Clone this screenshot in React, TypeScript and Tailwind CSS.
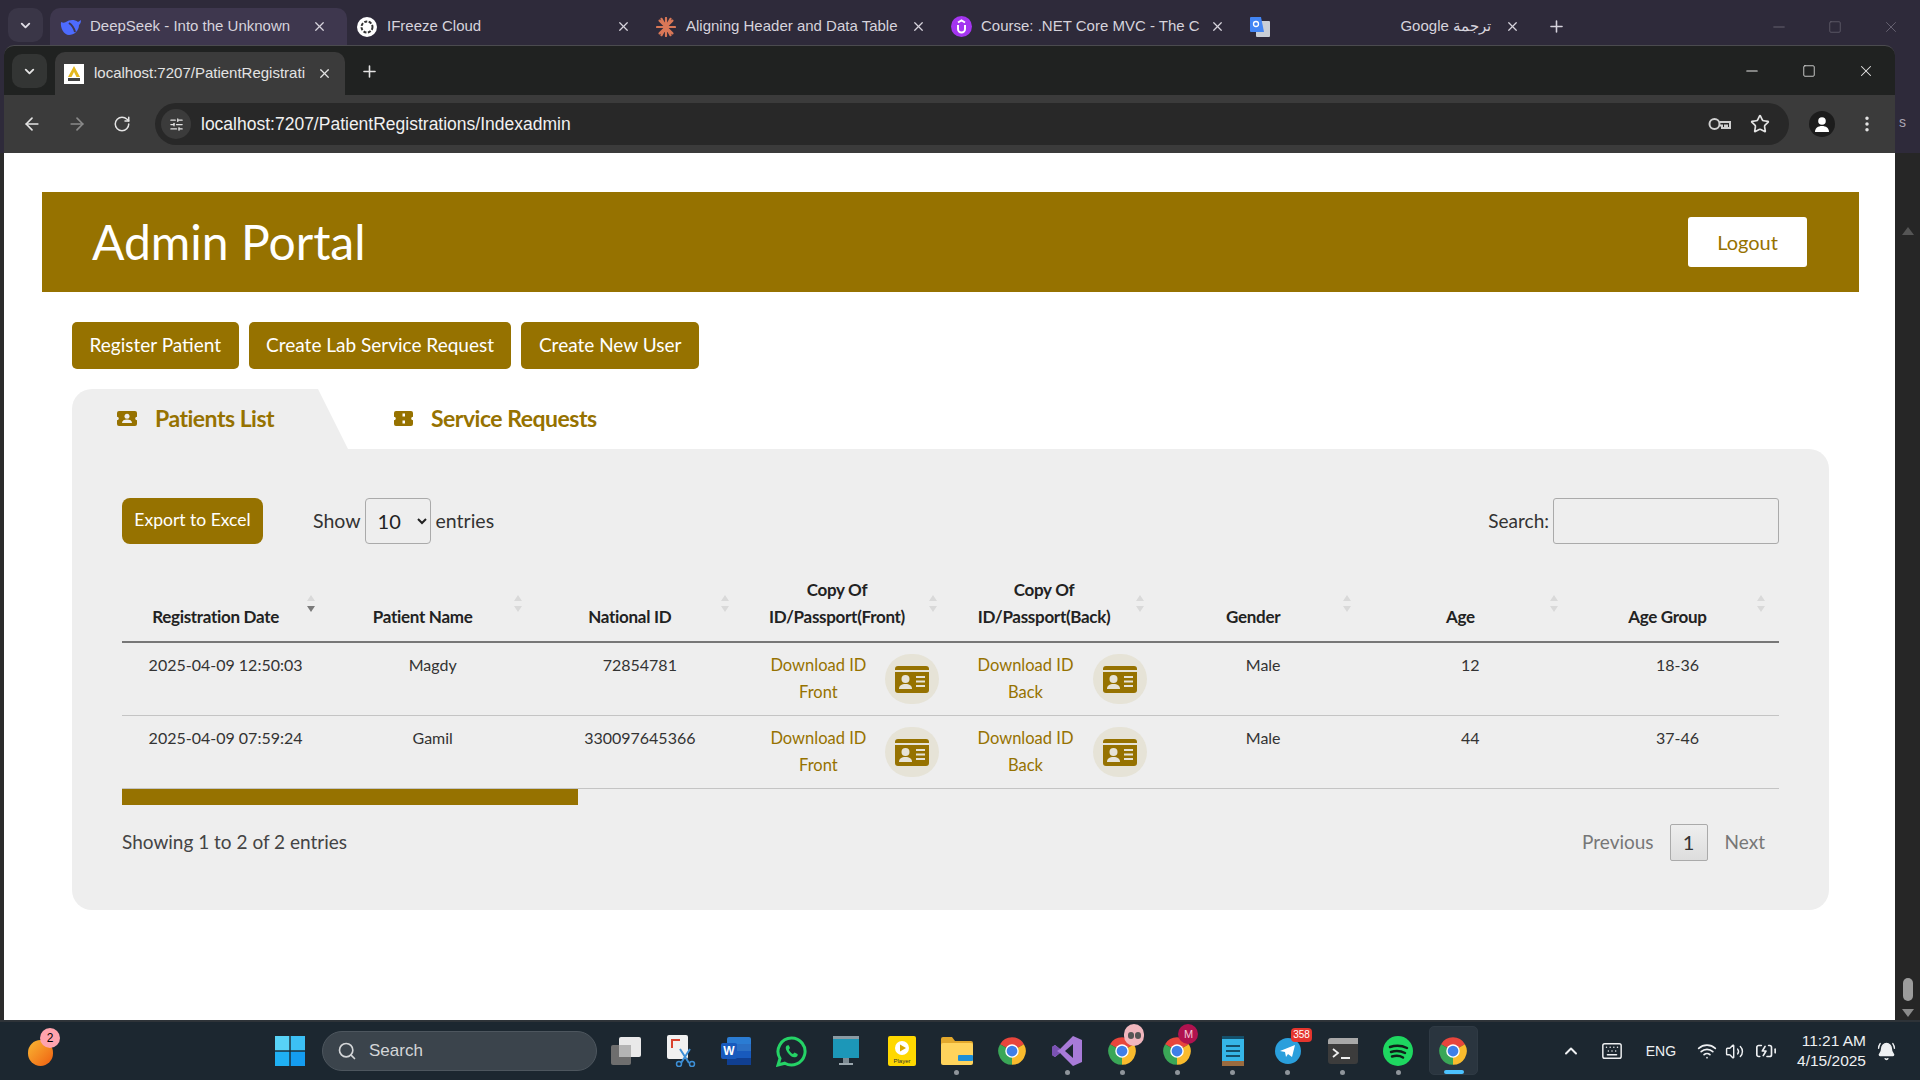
import type { ReactNode } from 'react'
import {
  ArrowLeft,
  ArrowRight,
  ChevronDown,
  ChevronUp,
  EllipsisVertical,
  Minus,
  Plus,
  RotateCw,
  Search,
  SlidersHorizontal,
  Square,
  Star,
  Volume2,
  Wifi,
  X,
  Keyboard,
  BatteryCharging,
  BellRing,
} from 'lucide-react'

const HEADERS = [
  ['Registration Date'],
  ['Patient Name'],
  ['National ID'],
  ['Copy Of', 'ID/Passport(Front)'],
  ['Copy Of', 'ID/Passport(Back)'],
  ['Gender'],
  ['Age'],
  ['Age Group'],
]

const ROWS = [
  { date: '2025-04-09 12:50:03', name: 'Magdy', id: '72854781', gender: 'Male', age: '12', group: '18-36' },
  { date: '2025-04-09 07:59:24', name: 'Gamil', id: '330097645366', gender: 'Male', age: '44', group: '37-46' },
]

function ChromeLogo({ size = 30 }: { size?: number }) {
  return (
    <svg width={size} height={size} viewBox="0 0 24 24">
      <path d="M12 12 2.47 6.5A11 11 0 0 1 21.53 6.5Z" fill="#e8453c" />
      <path d="M12 12 21.53 6.5A11 11 0 0 1 12 23Z" fill="#f9bb2d" />
      <path d="M12 12 12 23A11 11 0 0 1 2.47 6.5Z" fill="#3aa757" />
      <circle cx="12" cy="12" r="5.4" fill="#fff" />
      <circle cx="12" cy="12" r="4.3" fill="#3f7fe8" />
    </svg>
  )
}

function IdCardIcon() {
  return (
    <svg width="34" height="27" viewBox="0 0 34 27">
      <path d="M3 0h28a3 3 0 0 1 3 3v1H0V3a3 3 0 0 1 3-3Z" fill="#967200" />
      <path d="M0 6h34v18a3 3 0 0 1-3 3H3a3 3 0 0 1-3-3Z" fill="#967200" />
      <circle cx="10.5" cy="13" r="4" fill="#e6e3d7" />
      <path d="M4 23c0-3.5 2.5-5 6.500-5s6.500 1.500 6.500 5Z" fill="#e6e3d7" />
      <path d="M21 10h9v2h-9zM21 14.500h9v2h-9zM21 19h9v2h-9z" fill="#e6e3d7" />
    </svg>
  )
}

function PatientTabIcon() {
  return (
    <svg width="20" height="15" viewBox="0 0 20 15" fill="#967200">
      <path d="M2 0h16a2 2 0 0 1 2 2v3.700a1.800 1.800 0 0 0 0 3.600V13a2 2 0 0 1-2 2H2a2 2 0 0 1-2-2V9.300a1.800 1.800 0 0 0 0-3.600V2a2 2 0 0 1 2-2Z" />
      <circle cx="10" cy="5.300" r="2.500" fill="#eeeeee" />
      <path d="M5 12c0-2.400 2.200-3.500 5-3.500s5 1.100 5 3.500Z" fill="#eeeeee" />
    </svg>
  )
}

function TicketTabIcon() {
  return (
    <svg width="19" height="15" viewBox="0 0 19 15" fill="#967200">
      <path d="M2 0h15a2 2 0 0 1 2 2v3.700a1.800 1.800 0 0 0 0 3.600V13a2 2 0 0 1-2 2H2a2 2 0 0 1-2-2V9.300a1.800 1.800 0 0 0 0-3.600V2a2 2 0 0 1 2-2Z" />
      <path d="M8.500 2.500h2.500v3H8.500zM8.500 9.500h2.500v3H8.500z" fill="#ffffff" />
    </svg>
  )
}

function SortArrows({ active }: { active?: boolean }) {
  return (
    <span className="absolute right-[14px] top-[50%] flex translate-y-[-11px] flex-col gap-[5px]">
      <svg width="8" height="6" viewBox="0 0 8 6"><path d="M4 0 8 6H0Z" fill="#d9d9d9" /></svg>
      <svg width="8" height="6" viewBox="0 0 8 6"><path d="M0 0H8L4 6Z" fill={active ? '#7a7a7a' : '#d9d9d9'} /></svg>
    </span>
  )
}

function OuterTab({ icon, title, active, width, center }: { icon: ReactNode; title: string; active?: boolean; width: string; center?: boolean }) {
  return (
    <div className={`flex h-[37px] shrink-0 items-center pl-[10px] ${width} ${active ? 'rounded-t-[10px] bg-[#3e374e] pr-[20px]' : 'pr-[15px]'}`}>
      <span className="flex w-[30px] shrink-0 items-center">{icon}</span>
      <span className={`min-w-0 flex-1 overflow-hidden whitespace-nowrap text-[15px] text-[#d6d3dc] ${center ? 'text-right pr-[10px]' : ''}`}>{title}</span>
      <X size={15} strokeWidth={2} className="ml-[4px] shrink-0 text-[#d6d3dc]" />
    </div>
  )
}

function Sep() {
  return <span className="h-[24px] w-px shrink-0 bg-[#4a4558]" />
}

function TopChrome() {
  return (
    <div className="flex h-[45px] shrink-0 items-end bg-[#2e2a3a] pl-[8px]">
      <div className="mb-[3px] mr-[7px] flex h-[34px] w-[35px] items-center justify-center rounded-[10px] bg-[#3a3647]">
        <ChevronDown size={15} strokeWidth={3} className="text-[#e0dde6]" />
      </div>
      <OuterTab
        active
        width="w-[297px]"
        title="DeepSeek - Into the Unknown"
        icon={<svg width="22" height="18" viewBox="0 0 22 18"><path d="M1 4c2 1 3 1 5 0 3-2 8-3 12 0l3-2c0 3-1 4-2 5 0 6-5 10-10 10C4 17 0 10 1 4Z" fill="#4d6bfe" /><path d="M9 5c3 2 5 5 6 9" stroke="#3e374e" strokeWidth="2" fill="none" /></svg>}
      />
      <OuterTab
        width="w-[299px]"
        title="IFreeze Cloud"
        icon={<svg width="20" height="20" viewBox="0 0 20 20"><circle cx="10" cy="10" r="10" fill="#fff" /><circle cx="10" cy="10" r="5.500" fill="none" stroke="#333" strokeWidth="2" strokeDasharray="3 1.500" /></svg>}
      />
      <div className="mb-[7px]"><Sep /></div>
      <OuterTab
        width="w-[295px]"
        title="Aligning Header and Data Table"
        icon={<svg width="20" height="20" viewBox="0 0 20 20" stroke="#d97757" strokeWidth="2.200" strokeLinecap="round"><path d="M10 1v18M1 10h18M3.600 3.600l12.800 12.800M16.400 3.600 3.600 16.400M5.500 1.800l9 16.400M14.500 1.800l-9 16.400" /></svg>}
      />
      <div className="mb-[7px]"><Sep /></div>
      <OuterTab
        width="w-[299px]"
        title="Course: .NET Core MVC - The C"
        icon={<svg width="21" height="21" viewBox="0 0 21 21"><circle cx="10.500" cy="10.500" r="10.500" fill="#a435f0" /><path d="M7 9v4a3.500 3.500 0 0 0 7 0V9M7 6.500l3.500-2 3.500 2" fill="none" stroke="#fff" strokeWidth="2" /></svg>}
      />
      <div className="mb-[7px]"><Sep /></div>
      <OuterTab
        center
        width="w-[295px]"
        title="Google ترجمة"
        icon={<svg width="20" height="20" viewBox="0 0 20 20"><rect x="6" y="4" width="14" height="16" rx="1" fill="#c9ced6" /><path d="M0 1a1 1 0 0 1 1-1h10l3 15H1a1 1 0 0 1-1-1Z" fill="#4285f4" /><circle cx="6" cy="7" r="2.500" fill="none" stroke="#fff" strokeWidth="1.300" /></svg>}
      />
      <div className="mb-[7px]"><Sep /></div>
      <Plus size={19} strokeWidth={2} className="mb-[9px] ml-[12px] text-[#d6d3dc]" />
      <div className="mb-[9px] ml-auto flex items-center gap-[40px] pr-[20px] text-[#6b6775]">
        <Minus size={18} strokeWidth={1.2} />
        <Square size={14} strokeWidth={1.2} />
        <X size={18} strokeWidth={1.2} />
      </div>
    </div>
  )
}

function BrowserBar() {
  return (
    <div className="flex shrink-0 bg-[#2e2a3a]">
      <div className="ml-[4px] w-[1891px] overflow-hidden rounded-t-[10px] border-t border-[#4b4b4f] bg-[#202221]">
        <div className="flex h-[49px] items-end pl-[8px]">
          <div className="mb-[7px] mr-[8px] flex h-[34px] w-[35px] items-center justify-center rounded-[10px] bg-[#333534]">
            <ChevronDown size={15} strokeWidth={3} className="text-[#e3e3e3]" />
          </div>
          <div className="flex h-[43px] w-[290px] items-center rounded-t-[10px] bg-[#3b3b3b] pl-[9px] pr-[13px]">
            <span className="mr-[10px] flex h-[20px] w-[20px] shrink-0 items-center justify-center bg-white">
              <svg width="14" height="16" viewBox="0 0 14 16"><path d="M7 0 13 11H9.500L7 6 4.500 11H1Z" fill="#e5b81f" /><rect x="1" y="12" width="12" height="3" fill="#444" /></svg>
            </span>
            <span className="min-w-0 flex-1 overflow-hidden whitespace-nowrap text-[15px] text-[#e3e3e3]">localhost:7207/PatientRegistrati</span>
            <X size={15} strokeWidth={2} className="ml-[9px] shrink-0 text-[#e3e3e3]" />
          </div>
          <Plus size={19} strokeWidth={2} className="mb-[14px] ml-[15px] text-[#e3e3e3]" />
          <div className="mb-[15px] ml-auto flex items-center gap-[41px] pr-[20px] text-[#e6e6e6]">
            <Minus size={18} strokeWidth={1.4} />
            <Square size={14} strokeWidth={1.4} />
            <X size={18} strokeWidth={1.4} />
          </div>
        </div>
        <div className="flex h-[58px] items-center bg-[#3b3b3b] pl-[18px] pr-[18px] text-[#e3e3e3]">
          <ArrowLeft size={20} strokeWidth={2} />
          <ArrowRight size={20} strokeWidth={2} className="ml-[25px] text-[#8a8a8a]" />
          <RotateCw size={18} strokeWidth={2} className="ml-[26px]" />
          <div className="ml-[24px] flex h-[42px] flex-1 items-center rounded-full bg-[#282828] pl-[6px] pr-[19px]">
            <span className="flex h-[30px] w-[30px] items-center justify-center rounded-full bg-[#3b3b3b]">
              <SlidersHorizontal size={15} strokeWidth={2} />
            </span>
            <span className="ml-[10px] text-[17.5px] text-[#f1f1f1]">
              localhost:7207/PatientRegistrations/Indexadmin
            </span>
            <svg className="ml-auto" width="23" height="14" viewBox="0 0 23 14" fill="none" stroke="#cfcfcf" strokeWidth="2">
              <circle cx="6.500" cy="7" r="5" />
              <path d="M11.500 5H22v6h-3V8.500h-2V11h-3V8.500h-2.500" />
            </svg>
            <Star size={20} strokeWidth={2} className="ml-[19px]" />
          </div>
          <span className="ml-[20px] flex h-[26px] w-[26px] items-center justify-center overflow-hidden rounded-full bg-[#1c1c1c]">
            <svg width="16" height="15" viewBox="0 0 16 15" fill="#fff"><circle cx="8" cy="4" r="3.800" /><path d="M1 15c0-4 3-6 7-6s7 2 7 6Z" /></svg>
          </span>
          <EllipsisVertical size={20} strokeWidth={2.2} className="ml-[22px]" />
        </div>
      </div>
      <div className="flex flex-1 items-end pb-[20px] pl-[4px] text-[14px] text-[#a9a5b2]">s</div>
    </div>
  )
}

function ActionButton({ label }: { label: string }) {
  return <button className="h-[47px] rounded-[5px] bg-[#967200] px-[17.5px] pb-[1px] text-[19px] text-white">{label}</button>
}

function PatientsTable() {
  return (
    <table className="w-[1657px] table-fixed border-collapse">
      <thead>
        <tr className="border-b-2 border-[#777777]">
          {HEADERS.map((lines, i) => (
            <th key={lines.join()} className={`relative h-[71px] w-[207.1px] pb-[11px] pr-[30px] text-center align-bottom text-[17px] font-bold leading-[27px] tracking-[-0.3px] text-[#222222] ${i > 4 ? 'pl-[14px]' : 'pl-[10px]'}`}>
              {lines.map((line) => (
                <div key={line} className="whitespace-nowrap">{line}</div>
              ))}
              <SortArrows active={i === 0} />
            </th>
          ))}
        </tr>
      </thead>
      <tbody>
        {ROWS.map((row) => (
          <tr key={row.id} className="border-b border-[#c4c4c4] text-[16px] leading-[27px] text-[#333333]">
            <td className="px-[10px] pb-[10px] pt-[8px] text-center align-top">{row.date}</td>
            <td className="px-[10px] pb-[10px] pt-[8px] text-center align-top">{row.name}</td>
            <td className="px-[10px] pb-[10px] pt-[8px] text-center align-top">{row.id}</td>
            {['Front', 'Back'].map((side) => (
              <td key={side} className="p-[9px] px-[10px] align-top">
                <div className="flex items-center">
                  <a className="w-[130px] text-center text-[16.5px] text-[#967200]">
                    Download ID
                    <br />
                    {side}
                  </a>
                  <span className="ml-[2px] flex h-[50px] w-[54px] items-center justify-center rounded-full bg-[#e6e3d7]">
                    <IdCardIcon />
                  </span>
                </div>
              </td>
            ))}
            <td className="pb-[10px] pl-[14px] pr-[10px] pt-[8px] text-center align-top">{row.gender}</td>
            <td className="pb-[10px] pl-[14px] pr-[10px] pt-[8px] text-center align-top">{row.age}</td>
            <td className="pb-[10px] pl-[14px] pr-[10px] pt-[8px] text-center align-top">{row.group}</td>
          </tr>
        ))}
      </tbody>
    </table>
  )
}

function PageContent() {
  return (
    <div className="flex-1 bg-white">
      {/* Header */}
      <div className="ml-[38px] mr-[36px] mt-[39px] flex h-[100px] items-center justify-between bg-[#967200] pl-[50px] pr-[52px]">
        <h1 className="text-[48px] font-normal text-white">Admin Portal</h1>
        <button className="h-[50px] w-[119px] rounded-[3px] bg-white text-[20px] text-[#967200]">Logout</button>
      </div>

      <div className="ml-[68px] mt-[30px] flex gap-[10px]">
        <ActionButton label="Register Patient" />
        <ActionButton label="Create Lab Service Request" />
        <ActionButton label="Create New User" />
      </div>

      {/* Tabs */}
      <div className="ml-[68px] mt-[20px] w-[1757px]">
        <div className="flex h-[60px]">
          <div className="flex w-[276px] items-center rounded-tl-[20px] bg-[#eeeeee] pb-[2px] pl-[45px] [clip-path:polygon(0_0,246px_0,276px_100%,0_100%)]">
            <PatientTabIcon />
            <span className="ml-[18px] text-[23px] font-bold tracking-[-0.5px] text-[#967200]">Patients List</span>
          </div>
          <div className="flex items-center pb-[2px] pl-[46px]">
            <TicketTabIcon />
            <span className="ml-[18px] text-[23px] font-bold tracking-[-0.5px] text-[#967200]">Service Requests</span>
          </div>
        </div>

        <div className="h-[461px] rounded-b-[20px] rounded-tr-[20px] bg-[#eeeeee] px-[50px] pt-[49px]">
          <div className="flex h-[46px] items-center">
            <button className="h-[46px] w-[141px] rounded-[8px] bg-[#967200] pb-[1px] text-[17.5px] text-white">Export to Excel</button>
            <span className="ml-[50px] text-[19.5px] text-[#333333]">Show</span>
            <select defaultValue="10" className="ml-[4px] h-[46px] w-[66px] rounded-[4px] border border-[#aaaaaa] bg-transparent pl-[8px] text-[20px] text-[#222222]">
              <option value="10">10</option>
            </select>
            <span className="ml-[5px] text-[19.5px] text-[#333333]">entries</span>
            <label className="ml-auto text-[19px] text-[#333333]">Search:</label>
            <input className="ml-[4px] h-[46px] w-[226px] rounded-[3px] border border-[#aaaaaa] bg-transparent" />
          </div>

          <div className="mt-[27px]">
            <PatientsTable />
          </div>

          <div className="h-[16px] w-[456px] bg-[#967200]" />

          <div className="mt-[19px] flex h-[36px] items-center text-[#444444]">
            <span className="text-[19px]">Showing 1 to 2 of 2 entries</span>
            <span className="ml-auto text-[19px] text-[#777777]">Previous</span>
            <span className="ml-[16px] flex h-[37px] w-[38px] items-center justify-center rounded-[2px] border border-[#aaaaaa] bg-gradient-to-b from-[#eeeeee] to-[#dddddd] text-[20px] text-[#333333]">1</span>
            <span className="ml-[17px] mr-[14px] text-[19px] text-[#777777]">Next</span>
          </div>
        </div>
      </div>
    </div>
  )
}

function WindowScrollbar() {
  return (
    <div className="flex w-[25px] flex-col items-center bg-[#262626] pt-[74px] pb-[3px] text-[#6f6f6f]">
      <svg width="12" height="8" viewBox="0 0 12 8"><path d="M6 0 12 8H0Z" fill="#555" /></svg>
      <div className="mt-auto h-[23px] w-[10px] rounded-full bg-[#9c9c9c]" />
      <svg className="mt-[8px]" width="12" height="8" viewBox="0 0 12 8"><path d="M0 0H12L6 8Z" fill="#8a8a8a" /></svg>
    </div>
  )
}

function Slot({ children, dot, active }: { children: ReactNode; dot?: boolean; active?: boolean }) {
  return (
    <div className="relative flex h-[60px] w-[55.2px] shrink-0 items-center justify-center">
      {active && <span className="absolute bottom-[6px] left-[3px] top-[5px] w-[49px] rounded-[5px] border border-[#2f3a44] bg-[#2a353f]" />}
      <span className="relative flex">{children}</span>
      {dot && <span className="absolute bottom-[6px] left-[25px] h-[5px] w-[5px] rounded-full bg-[#8f959b]" />}
      {active && <span className="absolute bottom-[7px] left-[18px] h-[4px] w-[20px] rounded-full bg-[#4cc2ff]" />}
    </div>
  )
}

function Taskbar() {
  return (
    <div className="flex h-[60px] shrink-0 items-center border-t-2 border-[#2e3338] bg-[#1c2730]">
      <div className="relative ml-[28px] h-[30px] w-[26px]">
        <span className="absolute bottom-0 left-0 h-[26px] w-[25px] rounded-full bg-gradient-to-br from-[#f7b733] to-[#ee5b0f]" />
        <span className="absolute right-[-6px] top-[-8px] flex h-[20px] w-[20px] items-center justify-center rounded-full bg-[#ffa3ad] font-['Liberation_Sans'] text-[12px] text-black">2</span>
      </div>
      <svg className="ml-[221px]" width="30" height="30" viewBox="0 0 30 30">
        <rect width="14.300" height="14.300" fill="#58d3f7" />
        <rect x="15.700" width="14.300" height="14.300" fill="#3cc0f5" />
        <rect y="15.700" width="14.300" height="14.300" fill="#1fb0f3" />
        <rect x="15.700" y="15.700" width="14.300" height="14.300" fill="#149cf0" />
      </svg>
      <div className="ml-[17px] flex h-[40px] w-[275px] items-center rounded-full border border-[#4d565e] bg-[#3b444c] pl-[14px] text-[#d4d6d8]">
        <Search size={20} strokeWidth={2} />
        <span className="ml-[12px] font-['Liberation_Sans'] text-[17px]">Search</span>
      </div>
      <div className="ml-[1px] flex">
        <Slot>
          <svg width="32" height="32" viewBox="0 0 32 32"><rect x="1" y="10" width="20" height="20" rx="2" fill="#6e6e6e" /><rect x="9" y="2" width="22" height="20" rx="2" fill="#e9e9e9" /><rect x="9" y="10" width="12" height="12" fill="#b4b4b4" /></svg>
        </Slot>
        <Slot>
          <svg width="30" height="32" viewBox="0 0 30 32"><rect x="1" y="0" width="21" height="24" rx="2" fill="#f1f1f1" /><path d="M5 4h9v2H7v7H5Z" fill="#d9432f" /><path d="M14 14l9 14M24 14l-9 14" stroke="#3d8fd6" strokeWidth="2" /><circle cx="13" cy="29" r="2.500" fill="none" stroke="#3d8fd6" strokeWidth="1.500" /><circle cx="26" cy="29" r="2.500" fill="none" stroke="#3d8fd6" strokeWidth="1.500" /></svg>
        </Slot>
        <Slot>
          <svg width="30" height="28" viewBox="0 0 30 28"><rect x="6" y="0" width="24" height="28" rx="2" fill="#2b7cd3" /><rect x="6" y="7" width="24" height="7" fill="#2b6fc4" /><rect x="6" y="14" width="24" height="7" fill="#185abd" /><rect x="6" y="21" width="24" height="7" fill="#103f91" /><rect y="6" width="16" height="16" rx="2" fill="#185abd" /><text x="8" y="18" textAnchor="middle" fill="#fff" fontSize="12" fontWeight="700" fontFamily="Liberation Sans">W</text></svg>
        </Slot>
        <Slot>
          <svg width="31" height="31" viewBox="0 0 31 31"><path d="M15.500 2A13.500 13.500 0 0 0 4 22.500L2 29l6.800-1.800A13.500 13.500 0 1 0 15.500 2Z" fill="none" stroke="#25d366" strokeWidth="3" /><path d="M11 9.500c-2 1.500-1.500 4 1 7.500s5.500 5 8 4c1.500-.6 2-2 1.500-3l-3-1.500-1.500 1.500c-1.500-.6-3.500-2.500-4.200-4.300L14 12l-1.200-2.800Z" fill="#25d366" /></svg>
        </Slot>
        <Slot>
          <svg width="28" height="30" viewBox="0 0 28 30"><rect x="1" y="0" width="26" height="22" fill="#1c97b8" /><rect x="1" y="0" width="26" height="3" fill="#8a9aa3" /><rect x="11" y="22" width="6" height="5" fill="#7d8a92" /><rect x="7" y="27" width="14" height="2" fill="#9aa6ad" /></svg>
        </Slot>
        <Slot>
          <svg width="28" height="30" viewBox="0 0 28 30"><rect width="28" height="30" rx="2" fill="#ffd800" /><circle cx="14" cy="12" r="7" fill="#fff" /><path d="M12 8.500 18 12l-6 3.500Z" fill="#d8a800" /><text x="14" y="27" textAnchor="middle" fontSize="6" fill="#333" fontFamily="Liberation Sans">Player</text></svg>
        </Slot>
        <Slot dot>
          <svg width="32" height="28" viewBox="0 0 32 28"><path d="M0 2a2 2 0 0 1 2-2h9l3 4h16a2 2 0 0 1 2 2v4H0Z" fill="#e3a82c" /><rect y="6" width="32" height="22" rx="2" fill="#ffd35c" /><rect x="17" y="18" width="15" height="6" rx="1" fill="#1d8fd8" /></svg>
        </Slot>
        <Slot><ChromeLogo /></Slot>
        <Slot dot>
          <svg width="30" height="30" viewBox="0 0 30 30"><path d="M21 0 30 4V26L21 30 8 17 3 21 0 19V11L3 9 8 13Z" fill="#a87bd8" /><path d="M21 8 13 15 21 22Z" fill="#1c2730" /><path d="M0 11 3 9 8 13 5 15 8 17 3 21 0 19Z" fill="#7a52b3" /></svg>
        </Slot>
        <Slot dot>
          <ChromeLogo />
          <span className="absolute right-[-7px] top-[-12px] flex h-[22px] w-[20px] items-center justify-center gap-[1px] rounded-full bg-[#f0b6bd]">
            <span className="h-[7px] w-[6px] rounded-full bg-[#555]" />
            <span className="h-[7px] w-[6px] rounded-full bg-[#555]" />
          </span>
        </Slot>
        <Slot dot>
          <ChromeLogo />
          <span className="absolute right-[-6px] top-[-12px] flex h-[20px] w-[20px] items-center justify-center rounded-full bg-[#b0124f] font-['Liberation_Sans'] text-[11px] text-[#f3c9d6]">M</span>
        </Slot>
        <Slot dot>
          <svg width="22" height="30" viewBox="0 0 22 30"><rect width="22" height="30" rx="1" fill="#35b6e8" /><rect y="25" width="22" height="5" fill="#9a6b3f" /><path d="M4 9h14v2H4zM4 14h14v2H4zM4 19h14v2H4z" fill="#14506b" /><rect width="22" height="3" fill="#14506b" /></svg>
        </Slot>
        <Slot dot>
          <svg width="26" height="30" viewBox="0 0 26 30"><circle cx="13" cy="15" r="13" fill="#2a9fdc" /><path d="M5 15 20 9l-3 12-4-3-2 3-1-5Z" fill="#fff" /></svg>
          <span className="absolute right-[-11px] top-[-8px] rounded-[4px] bg-[#e5352d] px-[2px] font-['Liberation_Sans'] text-[10px] leading-[14px] text-white">358</span>
        </Slot>
        <Slot dot>
          <svg width="30" height="26" viewBox="0 0 30 26"><rect width="30" height="26" rx="3" fill="#3c3c3c" /><path d="M0 3a3 3 0 0 1 3-3h27v6H0Z" fill="#a8a8a8" /><path d="M5 11l5 4-5 4" fill="none" stroke="#eee" strokeWidth="1.800" /><rect x="13" y="19" width="9" height="2" fill="#eee" /></svg>
        </Slot>
        <Slot dot>
          <svg width="30" height="30" viewBox="0 0 30 30"><circle cx="15" cy="15" r="15" fill="#1ed760" /><path d="M7 11c6-2 12-1.500 17 1M8 16c5-1.500 10-1 14 1M9 20.500c4-1 8-.8 11 1" fill="none" stroke="#10201a" strokeWidth="2.500" strokeLinecap="round" /></svg>
        </Slot>
        <Slot active><ChromeLogo /></Slot>
      </div>

      <div className="ml-auto flex items-center text-[#eef0f2]">
        <ChevronUp size={20} strokeWidth={2.4} />
        <Keyboard size={22} strokeWidth={1.6} className="ml-[20px]" />
        <span className="ml-[23px] font-['Liberation_Sans'] text-[14px]">ENG</span>
        <Wifi size={20} strokeWidth={2} className="ml-[21px]" />
        <Volume2 size={19} strokeWidth={1.8} className="ml-[8px]" />
        <BatteryCharging size={22} strokeWidth={1.8} className="ml-[11px]" />
        <div className="ml-[20px] flex flex-col items-end font-['Liberation_Sans'] text-[15.5px] leading-[20px]">
          <span>11:21 AM</span>
          <span>4/15/2025</span>
        </div>
        <BellRing size={19} strokeWidth={1.8} className="ml-[11px] mr-[24px] fill-[#eef0f2]" />
      </div>
    </div>
  )
}

export default function App() {
  return (
    <div className="flex h-[1080px] w-[1920px] flex-col overflow-hidden bg-[#262626] font-['Lato','Liberation_Sans',sans-serif]">
      <div className="font-['Liberation_Sans',sans-serif]">
        <TopChrome />
        <BrowserBar />
      </div>
      <div className="flex min-h-0 flex-1">
        <div className="w-[4px] bg-[#2b2b2b]" />
        <PageContent />
        <WindowScrollbar />
      </div>
      <Taskbar />
    </div>
  )
}
